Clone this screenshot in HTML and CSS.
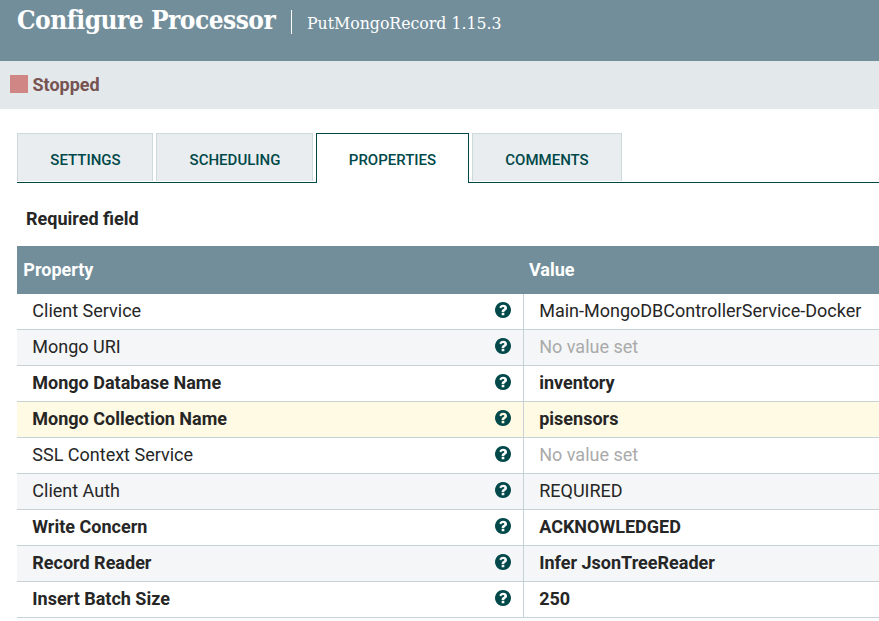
FILE: index.html
```html
<!DOCTYPE html>
<html lang="en"><head><meta charset="utf-8"><title>Configure Processor</title><link rel="stylesheet" href="styles.css"></head>
<body>
<svg class="defs" width="0" height="0"><symbol id="help" viewBox="0 0 1536 1536"><path d="M896 1248v-192q0-14-9-23t-23-9H672q-14 0-23 9t-9 23v192q0 14 9 23t23 9h192q14 0 23-9t9-23zm256-672q0-88-55.500-163T958 297t-170-41q-243 0-371 213-15 24 8 42l132 100q7 6 19 6 16 0 25-12 53-68 86-92 34-24 86-24 48 0 85.500 26t37.500 59q0 38-20 61t-68 45q-63 28-115.500 86.500T640 892v36q0 14 9 23t23 9h192q14 0 23-9t9-23q0-19 21.500-49.500T972 829q32-18 49-28.500t46-35 44.500-48 28-60.500 12.500-81zm384 192q0 209-103 385.500T1153.500 1433 768 1536t-385.500-103T103 1153.500 0 768t103-385.500T382.500 103 768 0t385.500 103T1433 382.500 1536 768z"/></symbol></svg>
<header class="header"><h1>Configure Processor</h1><span class="subtitle">PutMongoRecord 1.15.3</span></header>
<div class="status"><span class="stop"></span><span>Stopped</span></div>
<main>
<nav class="tabs"><span class="tab settings">SETTINGS</span><span class="tab scheduling">SCHEDULING</span><span class="tab selected">PROPERTIES</span><span class="tab comments">COMMENTS</span></nav>
<div class="required">Required field</div>
<div class="table">
<div class="row head"><div class="name">Property</div><div class="value">Value</div></div>
<div class="row"><div class="name"><span>Client Service</span><svg><use href="#help"/></svg></div><div class="value"><span>Main-MongoDBControllerService-Docker</span></div></div>
<div class="row even"><div class="name"><span>Mongo URI</span><svg><use href="#help"/></svg></div><div class="value unset"><span>No value set</span></div></div>
<div class="row bold"><div class="name"><span>Mongo Database Name</span><svg><use href="#help"/></svg></div><div class="value"><span>inventory</span></div></div>
<div class="row bold hover"><div class="name"><span>Mongo Collection Name</span><svg><use href="#help"/></svg></div><div class="value"><span>pisensors</span></div></div>
<div class="row"><div class="name"><span>SSL Context Service</span><svg><use href="#help"/></svg></div><div class="value unset"><span>No value set</span></div></div>
<div class="row even"><div class="name"><span>Client Auth</span><svg><use href="#help"/></svg></div><div class="value"><span>REQUIRED</span></div></div>
<div class="row bold"><div class="name"><span>Write Concern</span><svg><use href="#help"/></svg></div><div class="value"><span>ACKNOWLEDGED</span></div></div>
<div class="row even bold"><div class="name"><span>Record Reader</span><svg><use href="#help"/></svg></div><div class="value"><span>Infer JsonTreeReader</span></div></div>
<div class="row bold"><div class="name"><span>Insert Batch Size</span><svg><use href="#help"/></svg></div><div class="value"><span>250</span></div></div>
</div>
</main>
</body></html>
```
FILE: styles.css
```css
* { box-sizing: border-box; }
body { margin: 0; height: 621px; overflow: hidden; background: #fff; color: #262626; font: 18px/22px Roboto, sans-serif; }
.defs { display: block; }
.header { display: flex; height: 61px; padding-left: 17px; background: #728e9b; color: #fff; font-family: "Roboto Slab", "DejaVu Serif Condensed", "DejaVu Serif", serif; white-space: nowrap; }
h1 { width: 275px; height: 24px; margin: 10px 0 0; border-right: 1px solid #fff; font-size: 26px; line-height: 20px; letter-spacing: -0.5px; }
.subtitle { margin: 13px 0 0 15px; font-size: 17.5px; line-height: 21px; letter-spacing: 0; }
.status { display: flex; align-items: center; gap: 5px; height: 48px; padding-left: 9.5px; background: #e3e8eb; color: #775351; font-weight: 700; }
.stop { width: 18px; height: 18px; background: #d18686; margin-top: -3px; }
main { padding-left: 17px; }
.tabs { display: flex; align-items: flex-end; gap: 3px; height: 74px; border-bottom: 1px solid #004849; }
.tab { height: 48px; margin-bottom: 1px; border: 1px solid #ccdadb; border-bottom: 0; background: #e9edf0; color: #004849; font-size: 15px; line-height: 53px; font-weight: 500; text-align: center; }
.settings { width: 136px; padding-left: 1px; }
.scheduling { width: 157px; padding-left: 1px; }
.selected { width: 153px; height: 50px; margin-bottom: -1px; border-color: #004849; background: #fff; }
.comments { width: 150px; }
.required { height: 63px; padding: 25px 9px 0; font-weight: 700; }
.row { display: flex; height: 36px; border-bottom: 1px solid #c7d2d7; }
.name { display: flex; justify-content: space-between; align-items: center; width: 507px; padding: 0 12px 2px 15.3px; border-right: 1px solid #c7d2d7; }
.name svg { width: 16px; height: 16px; margin-top: -2px; fill: #004849; }
.value { display: flex; align-items: center; padding: 0 0 2px 15.2px; white-space: nowrap; }
.head { height: 48px; background: #728e9b; color: #fff; font-weight: 700; border: 0; }
.head .name { padding: 0 0 0 6.3px; border: 0; }
.head .value { padding: 0 0 0 5px; }
.even { background: #f4f6f7; }
.hover { background: #fffae3; }
.bold { font-weight: 700; }
.unset { color: #aaa; }
```
